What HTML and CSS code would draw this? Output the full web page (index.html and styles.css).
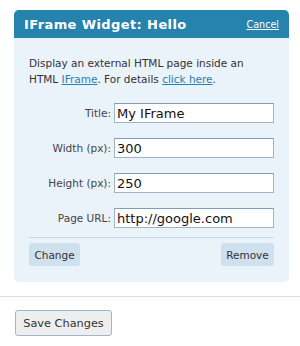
FILE: index.html
```html
<!DOCTYPE html>
<html>
<head>
<meta charset="utf-8">
<link rel="stylesheet" href="styles.css">
</head>
<body>
<div class="widget">
  <div class="widget-head">
    <span class="widget-title">IFrame Widget: Hello</span>
    <a class="cancel" href="#">Cancel</a>
  </div>
  <div class="widget-body">
    <p class="desc">Display an external HTML page inside an HTML <a href="#">IFrame</a>. For details <a href="#">click here</a>.</p>
    <div class="row"><label>Title:</label><input class="field" value="My IFrame"></div>
    <div class="row"><label>Width (px):</label><input class="field" value="300"></div>
    <div class="row"><label>Height (px):</label><input class="field" value="250"></div>
    <div class="row"><label>Page URL:</label><input class="field" value="http://google.com"></div>
    <div class="actions">
      <button class="act">Change</button>
      <button class="act">Remove</button>
    </div>
  </div>
</div>
<div class="footer">
  <button class="save">Save Changes</button>
</div>
</body>
</html>
```
FILE: styles.css
```css
html, body { margin: 0; padding: 0; background: #fff; }
body { font-family: "DejaVu Sans", Verdana, sans-serif; font-size: 10.5px; color: #333; }
.widget { margin: 10px 11px 0 14px; background: #eaf2fa; border-radius: 5px; }
.widget-head {
  height: 28px; background: #2683ae; color: #fff;
  border-radius: 5px 5px 0 0;
  display: flex; align-items: center; justify-content: space-between;
  padding: 0 10px 0 10px;
}
.widget-title { font-weight: bold; font-size: 13px; letter-spacing: 0.4px; }
.cancel { color: #fff; font-size: 9.6px; }
.widget-body { padding: 17px 15px 16px 15px; }
.desc { margin: 0 0 16px 0; line-height: 16px; color: #333; }
.desc a { color: #2583ad; }
.row { display: flex; justify-content: flex-end; align-items: center; height: 20px; margin-bottom: 15px; }
.row label { margin-right: 3px; color: #444; }
.field {
  width: 160px; height: 20px; box-sizing: border-box; margin: 0;
  border: 1px solid #9fb4c7; border-top-color: #7e9db9; background: #fff;
  font-family: "DejaVu Sans", Verdana, sans-serif; font-size: 13px; color: #111; padding: 0 2px;
}
.actions { border-top: 1px solid #c8d6e3; margin-top: -6px; padding-top: 5px; display: flex; justify-content: space-between; }
.act {
  background: #cfe1ef; border: none; border-radius: 3px; height: 23px; padding: 0 4px;
  font-family: "DejaVu Sans", Verdana, sans-serif; font-size: 10.5px; color: #333;
}
.actions .act:first-child { width: 51px; }
.actions .act:last-child { width: 53px; }
.footer { margin-top: 14px; border-top: 1px solid #ddd; padding: 13px 0 0 15px; }
.save {
  width: 97px; height: 26px; background: #eee; border: 1px solid #9fb7cc; border-radius: 3px;
  font-family: "DejaVu Sans", Verdana, sans-serif; font-size: 11.3px; color: #333; padding: 0;
}
```
